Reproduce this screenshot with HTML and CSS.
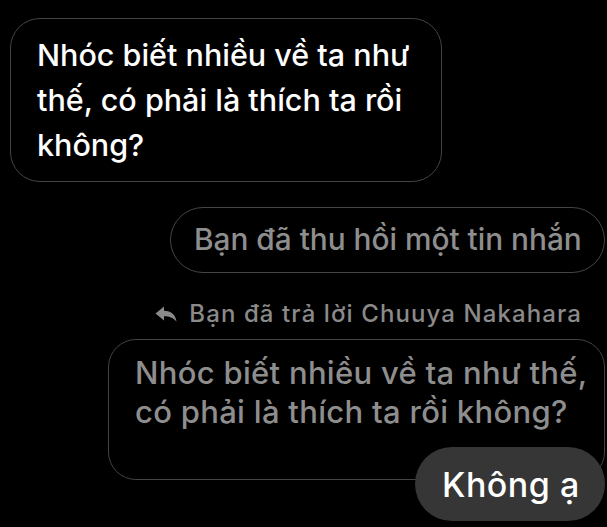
FILE: index.html
```html
<!DOCTYPE html>
<html lang="vi">
<head>
<meta charset="utf-8">
<link rel="stylesheet" href="styles.css">
</head>
<body>
<div class="chat">
  <div class="bubble incoming">Nhóc biết nhiều về ta như thế, có phải là thích ta rồi không?</div>
  <div class="bubble recalled">Bạn đã thu hồi một tin nhắn</div>
  <div class="reply-note">
    <svg class="reply-icon" viewBox="0 0 22 16" width="22" height="16" aria-hidden="true">
      <path d="M9 0.5 L0.5 7.5 L9 14.5 L9 10.2 C14 10.2 18 11.5 21.5 15.5 C20.5 9 16.5 5 9 4.8 Z" fill="#8a8a8a"/>
    </svg>
    <span>Bạn đã trả lời Chuuya Nakahara</span>
  </div>
  <div class="bubble quoted">Nhóc biết nhiều về ta như thế, có phải là thích ta rồi không?</div>
  <div class="bubble mine">Không ạ</div>
</div>
</body>
</html>
```

FILE: styles.css
```css
html, body {
  margin: 0;
  padding: 0;
  background: #000;
}
body {
  width: 607px;
  height: 527px;
  overflow: hidden;
  font-family: Inter, "Liberation Sans", sans-serif;
}
.chat {
  display: flex;
  flex-direction: column;
  align-items: flex-end;
  padding: 18px 2px 0 10px;
}
.bubble {
  box-sizing: border-box;
}
.incoming {
  align-self: flex-start;
  width: 432px;
  height: 164px;
  border: 1.5px solid #444;
  border-radius: 30px;
  padding: 13px 20px 0 26px;
  color: #fff;
  font-size: 30.5px;
  font-weight: 500;
  line-height: 45px;
}
.recalled {
  margin-top: 25px;
  width: 435px;
  height: 66px;
  border: 1.5px solid #444;
  border-radius: 33px;
  padding: 0 0 0 23px;
  display: flex;
  align-items: center;
  color: #8e8e8e;
  font-size: 29.8px;
  font-weight: 500;
  line-height: 1;
}
.reply-note {
  margin-top: 26px;
  margin-right: 23px;
  display: flex;
  align-items: center;
  gap: 12px;
  color: #8a8a8a;
  font-size: 24px;
  font-weight: 500;
  letter-spacing: 1.1px;
  line-height: 30px;
}
.reply-icon {
  display: block;
}
.quoted {
  margin-top: 10px;
  width: 497px;
  height: 141px;
  border: 1.5px solid #444;
  border-radius: 28px;
  padding: 13px 6px 0 26px;
  color: #8e8e8e;
  font-size: 31px;
  font-weight: 500;
  letter-spacing: 0.3px;
  line-height: 39px;
}
.mine {
  margin-top: -33px;
  width: 190px;
  height: 74px;
  border-radius: 37px;
  background: #363636;
  color: #fff;
  font-size: 34px;
  font-weight: 500;
  letter-spacing: 0.5px;
  display: flex;
  align-items: center;
  padding-left: 27px;
}
```
